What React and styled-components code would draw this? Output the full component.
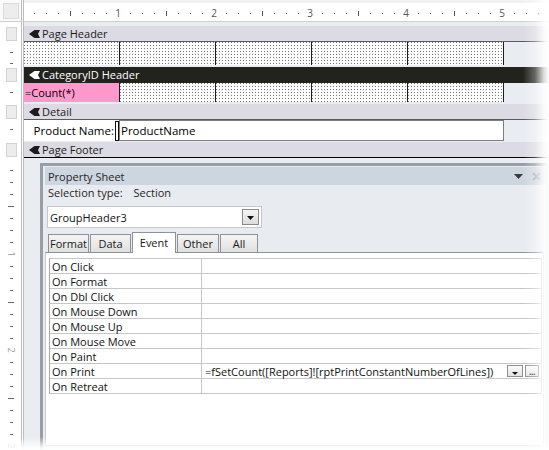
import React from 'react'
import styled, { createGlobalStyle } from 'styled-components'

const GlobalStyle = createGlobalStyle`
  html, body { margin: 0; padding: 0; background: #fff; }
  body {
    font-family: "Open Sans", "Noto Sans", "Liberation Sans", sans-serif;
    font-size: 11px;
    color: #1c1c1c;
  }
  * { box-sizing: border-box; }
`

const Frame = styled.div`
  position: relative;
  width: 549px;
  height: 450px;
  overflow: hidden;
  background: #fff;
  display: grid;
  grid-template-columns: 24px 1fr;
  grid-template-rows: 22px 1fr;
`

/* rulers */
const Corner = styled.div`
  background: #fafafa;
  border-right: 3px double #bdbdbd;
  border-bottom: 1px solid #cfcfcf;
  padding: 3px 0 0 3px;
`
const CornerKey = styled.div`
  width: 16px;
  height: 16px;
  background: #ededed;
  border: 1px solid #dadada;
`
const TopRuler = styled.div`
  background: #fff;
  border-top: 3px solid #f1f1f1;
  border-bottom: 1px solid #cfcfcf;
  overflow: hidden;
  svg { display: block; }
`
const LeftRuler = styled.div`
  background: #fff;
  border-right: 3px double #bdbdbd;
  display: flex;
  flex-direction: column;
  padding-top: 4px;
`
const RulerTab = styled.div`
  flex: none;
  height: 16px;
  margin-top: ${p => p.$gap || 0}px;
  padding: 1px 0 1px 6px;
`
const RulerKey = styled.div`
  width: 11px;
  height: 100%;
  background: #ececec;
  border: 1px solid #d3d3d3;
`
const RulerSpan = styled.div`
  flex: ${p => (p.$h ? 'none' : 1)};
  height: ${p => (p.$h ? `${p.$h}px` : 'auto')};
  overflow: hidden;
  svg { display: block; }
`

function HRuler() {
  const marks = []
  for (let k = 1; k <= 44; k++) {
    const x = -2 + 12 * k
    if (k % 8 === 0) {
      marks.push(
        <text key={k} x={x} y={14} textAnchor="middle" fontSize="10" fill="#555">
          {k / 8}
        </text>
      )
    } else if (k % 4 === 0) {
      marks.push(<rect key={k} x={x} y={8} width={1} height={5} fill="#555" />)
    } else {
      marks.push(<rect key={k} x={x} y={10} width={1} height={1} fill="#666" />)
    }
  }
  return <svg width="525" height="18">{marks}</svg>
}

// ticks down the side; every 12px is an eighth of an inch
function VTicks({ h, ticks }) {
  return (
    <svg width="21" height={h}>
      {ticks.map(([y, kind, label]) =>
        kind === 'num' ? (
          <text key={y} x={11} y={y + 3} textAnchor="middle" fontSize="9" fill="#9a9a9a"
            transform={`rotate(90 11 ${y})`}>
            {label}
          </text>
        ) : (
          <rect key={y} x={kind === 'long' ? 8 : 10} y={y} width={kind === 'long' ? 6 : 3}
            height={1} fill="#666" />
        )
      )}
    </svg>
  )
}

const footerTicks = Array.from({ length: 24 }, (_, i) => {
  const k = i + 1
  if (k % 8 === 0) return [12 * k, 'num', k / 8]
  if (k % 4 === 0) return [12 * k, 'long']
  return [12 * k, 'short']
})

/* report designer */
const Designer = styled.div`
  background: #e9ecf1;
  display: flex;
  flex-direction: column;
  padding-top: 4px;
  min-width: 0;
`
const SectionBar = styled.div`
  flex: none;
  height: 16px;
  margin-top: ${p => p.$gap || 0}px;
  padding-left: 5px;
  display: flex;
  align-items: center;
  gap: 2px;
  white-space: nowrap;
  background: ${p => (p.$dark ? '#23231e' : '#dcdae3')};
  color: ${p => (p.$dark ? '#fff' : '#1c1c1c')};
  border-bottom: 1px solid ${p => (p.$dark ? '#23231e' : p.$edge || '#5a5a62')};
  svg { display: block; flex: none; }
`
const Band = styled.div`
  flex: none;
  height: ${p => p.$h}px;
  display: flex;
`
const ReportWidth = styled.div`
  width: 480px;
  display: flex;
`
const DotCell = styled.div`
  width: 96px;
  height: 100%;
  border-right: 1px solid #1e1e1e;
  background-color: #fff;
  background-image:
    linear-gradient(90deg, #fff 2px, transparent 2px),
    linear-gradient(#fff 2px, #747474 2px);
  background-size: 3px 3px;
  background-position: 1px 1px;
`
const PinkField = styled.div`
  width: 96px;
  height: 100%;
  border-right: 1px solid #1e1e1e;
  background: #ff99cc;
  color: #000;
  padding-left: 1px;
  display: flex;
  align-items: center;
`
const LabelBox = styled.div`
  width: 91px;
  height: 100%;
  background: #fff;
  color: #000;
  font-size: 11.5px;
  padding-right: 1px;
  display: flex;
  align-items: center;
  justify-content: flex-end;
  white-space: nowrap;
`
const Handle = styled.div`
  width: 4px;
  height: 20px;
  margin-top: 1px;
  background: #fff;
  border: 1px solid #111;
`
const TextBox = styled.div`
  width: 385px;
  height: 100%;
  background: #fff;
  border: 1px solid #7e7e7e;
  color: #000;
  font-size: 11.5px;
  padding-left: 1px;
  display: flex;
  align-items: center;
`

// section selector glyph: solid wedge pointing left with a shallow notch
const SectionIcon = () => (
  <svg width="11" height="8" viewBox="0 0 11 8">
    <path d="M0 4 L5.5 0 H11 L9 4 L11 8 H5.5 Z" fill="currentColor" />
  </svg>
)

/* property sheet */
const Sheet = styled.div`
  position: absolute;
  left: 40px;
  top: 163px;
  width: 509px;
  height: 290px;
  border: 3px solid #989ea6;
  background: #e8ebf0;
  padding: 1px 0 0 2px;
  display: flex;
  flex-direction: column;
`
const SheetHeader = styled.div`
  flex: none;
  height: 18px;
  background: #cdd5de;
  padding: 0 5px 0 3px;
  display: flex;
  align-items: center;
  color: #262626;
  font-size: 11px;
  svg { display: block; }
`
const SheetTitle = styled.div`
  flex: 1;
`
const MenuArrow = styled.svg`
  margin-right: 9px;
`
const SelectionLine = styled.div`
  flex: none;
  height: 15px;
  padding-left: 3px;
  display: flex;
  align-items: center;
  color: #262626;
`
const SelectionValue = styled.span`
  margin-left: 11px;
`
const Combo = styled.div`
  flex: none;
  margin: 6px 0 0 2px;
  width: 215px;
  height: 22px;
  background: #fff;
  border: 1px solid #c4c8ce;
  padding: 0 2px 0 2px;
  display: flex;
  align-items: center;
  justify-content: space-between;
  color: #111;
`
const ComboButton = styled.div`
  width: 17px;
  height: 16px;
  border: 1px solid #8a8a8a;
  background: linear-gradient(#f5f5f5, #dcdcdc);
  display: flex;
  align-items: center;
  justify-content: center;
  padding-top: 2px;
`
const TabRow = styled.div`
  flex: none;
  height: 21px;
  margin: 4px 0 -1px 3px;
  display: flex;
  align-items: flex-end;
  gap: 1px;
  position: relative;
  z-index: 1;
`
const Tab = styled.div`
  width: ${p => p.$w}px;
  height: ${p => (p.$active ? 21 : 18)}px;
  margin-bottom: ${p => (p.$active ? 0 : 1)}px;
  border: 1px solid #8d9299;
  border-bottom: none;
  background: ${p => (p.$active ? '#fff' : 'linear-gradient(#f4f4f4, #e0e0e0)')};
  color: #1a1a1a;
  display: flex;
  align-items: center;
  justify-content: center;
  white-space: nowrap;
  padding-bottom: ${p => (p.$active ? 2 : 0)}px;
`
const Panel = styled.div`
  flex: 1;
  margin: 0 2px 4px 0;
  background: #fff;
  border: 1px solid #c9ccd1;
  border-top-color: #8e939b;
  padding: 5px 1px 0 3px;
`
const PropGrid = styled.div`
  display: grid;
  grid-template-columns: 152px 1fr;
  border-top: 1px solid #c6c6c6;
  border-left: 1px solid #a8a8a8;
`
const NameCell = styled.div`
  height: 15px;
  border-bottom: 1px solid #c6c6c6;
  border-right: 1px solid #c6c6c6;
  padding-left: 2px;
  display: flex;
  align-items: center;
  white-space: nowrap;
  color: #111;
`
const ValueCell = styled(NameCell)`
  padding: 0 2px 0 3px;
  justify-content: space-between;
`
const CellButtons = styled.div`
  display: flex;
  gap: 2px;
`
const MiniButton = styled.div`
  width: ${p => p.$w}px;
  height: 12px;
  border: 1px solid #8f8f8f;
  background: linear-gradient(#fbfbfb, #e3e3e3);
  display: flex;
  align-items: center;
  justify-content: center;
  padding-top: ${p => (p.$drop ? 4 : 0)}px;
  font-size: 9px;
  font-weight: bold;
  line-height: 1;
  color: #22324a;
  letter-spacing: -0.5px;
`

const EdgeFade = styled.div`
  position: absolute;
  inset: 0;
  pointer-events: none;
  background:
    linear-gradient(90deg, rgba(255,255,255,0) 523px, rgba(255,255,255,0.3) 535px, rgba(255,255,255,0.85) 544px, #fff 549px),
    linear-gradient(180deg, rgba(255,255,255,0) 437px, rgba(255,255,255,0.85) 447px, #fff 450px);
`

const tabs = [
  ['Format', 41],
  ['Data', 41],
  ['Event', 44],
  ['Other', 42],
  ['All', 38],
]

const events = [
  ['On Click', ''],
  ['On Format', ''],
  ['On Dbl Click', ''],
  ['On Mouse Down', ''],
  ['On Mouse Up', ''],
  ['On Mouse Move', ''],
  ['On Paint', ''],
  ['On Print', '=fSetCount([Reports]![rptPrintConstantNumberOfLines])'],
  ['On Retreat', ''],
]

const DownTriangle = ({ w = 7, h = 4, color = '#111' }) => (
  <svg width={w} height={h} viewBox={`0 0 ${w} ${h}`} style={{ display: 'block' }}>
    <path d={`M0 0 H${w} L${w / 2} ${h} Z`} fill={color} />
  </svg>
)

export default function App() {
  return (
    <>
      <GlobalStyle />
      <Frame>
        <Corner><CornerKey /></Corner>
        <TopRuler><HRuler /></TopRuler>

        <LeftRuler>
          <RulerTab><RulerKey /></RulerTab>
          <RulerSpan $h={23}><VTicks h={23} ticks={[[10, 'short'], [21, 'short']]} /></RulerSpan>
          <RulerTab $gap={2}><RulerKey /></RulerTab>
          <RulerSpan $h={19}><VTicks h={19} ticks={[[9, 'short']]} /></RulerSpan>
          <RulerTab $gap={2}><RulerKey /></RulerTab>
          <RulerSpan $h={21}><VTicks h={21} ticks={[[9, 'short']]} /></RulerSpan>
          <RulerTab $gap={1}><RulerKey /></RulerTab>
          <RulerSpan><VTicks h={300} ticks={footerTicks} /></RulerSpan>
        </LeftRuler>

        <Designer>
          <SectionBar><SectionIcon />Page Header</SectionBar>
          <Band $h={23}>
            <ReportWidth>
              {[0, 1, 2, 3, 4].map(i => <DotCell key={i} />)}
            </ReportWidth>
          </Band>

          <SectionBar $gap={2} $dark><SectionIcon />CategoryID Header</SectionBar>
          <Band $h={19}>
            <ReportWidth>
              <PinkField>=Count(*)</PinkField>
              {[0, 1, 2, 3].map(i => <DotCell key={i} />)}
            </ReportWidth>
          </Band>

          <SectionBar $gap={2}><SectionIcon />Detail</SectionBar>
          <Band $h={21}>
            <ReportWidth>
              <LabelBox>Product Name:</LabelBox>
              <Handle />
              <TextBox>ProductName</TextBox>
            </ReportWidth>
          </Band>

          <SectionBar $gap={1} $edge="#000"><SectionIcon />Page Footer</SectionBar>
        </Designer>

        <Sheet>
          <SheetHeader>
            <SheetTitle>Property Sheet</SheetTitle>
            <MenuArrow width="9" height="5" viewBox="0 0 9 5">
              <path d="M0 0 H9 L4.5 5 Z" fill="#3a3a3a" />
            </MenuArrow>
            <svg width="9" height="9" viewBox="0 0 9 9">
              <path d="M1 1 L8 8 M8 1 L1 8" stroke="#aab0b7" strokeWidth="2" />
            </svg>
          </SheetHeader>
          <SelectionLine>
            Selection type:<SelectionValue>Section</SelectionValue>
          </SelectionLine>
          <Combo>
            GroupHeader3
            <ComboButton><DownTriangle /></ComboButton>
          </Combo>
          <TabRow>
            {tabs.map(([name, w]) => (
              <Tab key={name} $w={w} $active={name === 'Event'}>{name}</Tab>
            ))}
          </TabRow>
          <Panel>
            <PropGrid>
              {events.map(([name, value]) => (
                <React.Fragment key={name}>
                  <NameCell>{name}</NameCell>
                  <ValueCell>
                    {value}
                    {value && (
                      <CellButtons>
                        <MiniButton $w={16} $drop><DownTriangle w={6} h={3} /></MiniButton>
                        <MiniButton $w={14}>...</MiniButton>
                      </CellButtons>
                    )}
                  </ValueCell>
                </React.Fragment>
              ))}
            </PropGrid>
          </Panel>
        </Sheet>

        <EdgeFade />
      </Frame>
    </>
  )
}
